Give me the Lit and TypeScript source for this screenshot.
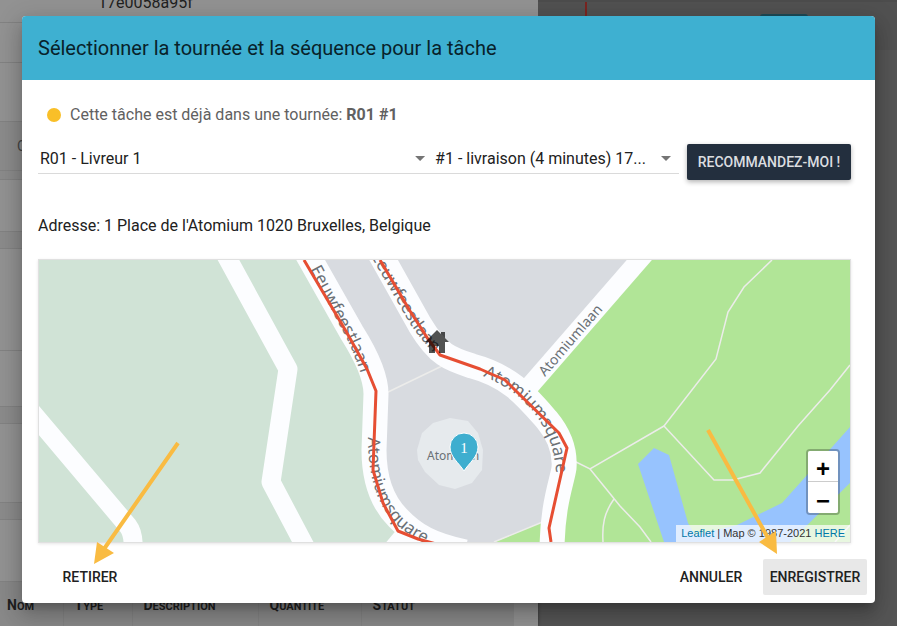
import { LitElement, html, css, svg } from "lit";
import { customElement } from "lit/decorators.js";

/* Dimmed dispatch page that lies behind the dialog. */
@customElement("dispatch-page")
class DispatchPage extends LitElement {
  static styles = css`
    :host {
      display: flex;
      min-height: 100vh;
      background: #555;
      font-family: Roboto, sans-serif;
      color: #1f1f1f;
    }
    .list {
      flex: 3;
      min-width: 0;
      background: #929292;
      box-shadow: 0 0 3px #333;
    }
    .row {
      box-sizing: border-box;
      border-bottom: 1px solid #828282;
      overflow: hidden;
    }
    .first {
      height: 23px;
      padding-left: 98px;
      font-size: 16px;
      line-height: 6px;
    }
    .h40 { height: 40px; }
    .h52 { height: 52px; }
    .h56 { height: 56px; }
    .h59 { height: 59px; }
    .h62 { height: 62px; }
    .h79 { height: 79px; }
    .h102 { height: 102px; }
    .band {
      height: 49px;
      padding-left: 17px;
      background: #8b8b8b;
      font-size: 14px;
      line-height: 49px;
      color: #444;
    }
    .gap {
      height: 17px;
      background: #8b8b8b;
    }
    .gap.small { height: 9px; }
    table {
      width: calc(100% - 24px);
      border-collapse: collapse;
      table-layout: fixed;
      background: #888;
    }
    th {
      height: 44px;
      padding: 4px 0 0 11px;
      box-sizing: border-box;
      border-left: 1px solid #828282;
      font-size: 11px;
      line-height: 20px;
      text-transform: uppercase;
      text-align: left;
    }
    th::first-letter { font-size: 14px; }
    th:first-child {
      width: 63px;
      padding-left: 7px;
      border-left: 0;
    }
    .c2 { width: 69px; }
    .c3 { width: 126px; }
    .c4 { width: 103px; }
    .board { flex: 2; }
    .timeline {
      display: flex;
      height: 50px;
      box-sizing: border-box;
      padding: 0 89px 0 47px;
      justify-content: space-between;
      border-top: 2px solid #4c4c4c;
      background: #515151;
    }
    .now {
      width: 2px;
      background: #7a2420;
    }
    .pill {
      width: 48px;
      height: 20px;
      margin-top: 12px;
      border-radius: 3px;
      background: #1c4a56;
    }
  `;
  render() {
    return html`
      <div class="list">
        <div class="row first">17e0058a95f</div>
        <div class="row h40"></div>
        <div class="row h59"></div>
        <div class="row band">C</div>
        <div class="row gap small"></div>
        <div class="row h52"></div>
        <div class="row gap"></div>
        <div class="row h102"></div>
        <div class="row h56"></div>
        <div class="row gap"></div>
        <div class="row h79"></div>
        <div class="row gap"></div>
        <div class="row h62"></div>
        <table>
          <tr>
            <th>Nom</th>
            <th class="c2">Type</th>
            <th class="c3">Description</th>
            <th class="c4">Quantité</th>
            <th>Statut</th>
          </tr>
        </table>
      </div>
      <div class="board">
        <div class="timeline"><div class="now"></div><div class="pill"></div></div>
      </div>
    `;
  }
}

/* Street map with route, stop marker and zoom control. */
@customElement("route-map")
class RouteMap extends LitElement {
  static styles = css`
    :host {
      display: block;
      position: relative;
      height: 282px;
      border: 1px solid #e0e0e0;
      box-shadow: 0 1px 3px rgba(0, 0, 0, 0.1);
      overflow: hidden;
    }
    .canvas {
      display: block;
      width: 100%;
      height: 100%;
    }
    .grey { fill: #d8dbe0; }
    .park { fill: #d0e3d6; }
    .green { fill: #b1e597; }
    .water { fill: #97c3fe; }
    .plaza { fill: #e6eaed; }
    .road {
      fill: none;
      stroke: #fcfdff;
      stroke-linejoin: round;
    }
    .wide { stroke-width: 25; }
    .mid { stroke-width: 19; }
    .trail {
      fill: none;
      stroke: #ececea;
      stroke-width: 1.5;
    }
    .route {
      fill: none;
      stroke: #e64e33;
      stroke-width: 3;
      stroke-linejoin: round;
    }
    .name {
      font-family: "Noto Sans", sans-serif;
      font-size: 17px;
      fill: #6a7075;
    }
    .street { font-size: 14px; }
    .place { font-size: 12px; }
    .house { fill: rgba(0, 0, 0, 0.68); }
    .pin {
      fill: #3eaecf;
      stroke: #fff;
      stroke-width: 1;
    }
    .pin-text {
      font-family: "Liberation Serif", serif;
      font-size: 15px;
      fill: #fff;
      text-anchor: middle;
    }
    .zoom {
      position: absolute;
      right: 10px;
      bottom: 27px;
      display: flex;
      flex-direction: column;
      border: 2px solid rgba(0, 0, 0, 0.25);
      border-radius: 4px;
      background-clip: padding-box;
    }
    .zoom button {
      width: 30px;
      height: 31px;
      box-sizing: border-box;
      padding: 6px 0 0;
      border: 0;
      background: #fff;
      font: bold 24px/24px "Liberation Sans", sans-serif;
      color: #000;
    }
    .zoom button:first-child {
      border-bottom: 1px solid #ccc;
      border-radius: 2px 2px 0 0;
    }
    .zoom button:last-child { border-radius: 0 0 2px 2px; }
    .credit {
      position: absolute;
      right: 0;
      bottom: 0;
      padding: 0 5px;
      background: rgba(255, 255, 255, 0.7);
      font: 11px/17px "Liberation Sans", sans-serif;
      color: #333;
    }
    .credit a {
      color: #0078a8;
      text-decoration: none;
    }
  `;
  render() {
    return html`
      <svg class="canvas" viewBox="39 260 811 282" preserveAspectRatio="xMidYMid slice">
        ${svg`
        <defs>
          <path id="lane-a" d="M310 269 L339 324 Q354 349 366 390" />
          <path id="lane-b" d="M356 230 L409 322 Q419 338 434 353" />
          <path id="ring-a" d="M483 376 C510 387 527 402 539 420 C550 437 556 452 557 490" />
          <path id="ring-b" d="M368 437 C368 478 377 505 396 524 C408 535 420 542 446 552" />
          <path id="lane-c" d="M545 377 L620 290" />
        </defs>
        <rect class="grey" x="39" y="260" width="811" height="282" />
        <path class="park" d="M39 260H311L352 333L375 390V455L382 500L402 528L391 542H39Z" />
        <path class="green" d="M638 260H850V542H552L564 465L555 430L530 386Z" />
        <path class="green" d="M495 542L552 518V542Z" />
        <path class="water" d="M638 464L654 448L669 455L688 523L695 535L737 525L782 503L850 427V483L790 542H664Z" />
        <path class="trail" d="M494 542L545 521M386 393L442 366" />
        <path class="trail" d="M772 260L744 287L728 312L716 359L664 426L714 480H733L760 473L798 426L830 390L850 365" />
        <path class="trail" d="M664 426L590 469L572 460M590 469L620 506L640 527L651 542M614 499C604 513 602 525 603 542M850 525L835 542" />
        <path class="road mid" d="M223 250L288 369L271 482L308 552" />
        <path class="road mid" d="M30 410L128 526Q134 534 133 550" />
        <path class="road wide" d="M305 250L352 333Q376 371 376 394L374 450C374 480 382 502 398 518C415 536 432 545 465 552" />
        <path class="road wide" d="M378 250L420 325C438 355 450 359 472 366C510 376 526 396 547 420C562 438 565 455 564 468C562 482 552 505 552 552" />
        <path class="road mid" d="M648 250L528 388" />
        <path class="road wide" d="M416 526L396 550" />
        <path class="plaza" d="M417 450L422 433L433 423L450 418L468 421L478 433L483 450L482 470L472 483L455 489L439 485L425 472L418 460Z" />
        <text class="name place" x="427" y="460">Atomium</text>
        <text class="name"><textPath href="#lane-a">Eeuwfeestlaan</textPath></text>
        <text class="name" text-anchor="end"><textPath href="#lane-b" startOffset="100%">Eeuwfeestlaan</textPath></text>
        <text class="name"><textPath href="#ring-a">Atomiumsquare</textPath></text>
        <text class="name"><textPath href="#ring-b">Atomiumsquare</textPath></text>
        <text class="name street"><textPath href="#lane-c">Atomiumlaan</textPath></text>
        <path class="route" d="M304 260L347 333L367 369L376 391L373 470L383 503L398 531L418 539L440 545" />
        <path class="route" d="M380 260L410 311L428 339L440 355L480 369L505 380L515 390L559 433L567 448L549 528L551 542" />
        <path class="house" d="M437 330L441 334V332H445V338L449 342H445V353H439V346H435V353H429V342H425Z" />
        <path class="pin" d="M464 471C459 463 450 457 450 447A14 14 0 0 1 478 447C478 457 469 463 464 471Z" />
        <text class="pin-text" x="464" y="453">1</text>
        `}
      </svg>
      <div class="zoom">
        <button aria-label="Zoom avant">+</button>
        <button aria-label="Zoom arrière">−</button>
      </div>
      <div class="credit"><a href="#">Leaflet</a> | Map © 1987-2021 <a href="#">HERE</a></div>
    `;
  }
}

@customElement("app-root")
class AppRoot extends LitElement {
  static styles = css`
    :host {
      display: block;
      position: relative;
      height: 100vh;
      overflow: hidden;
      font-family: Roboto, sans-serif;
      color: #212121;
    }
    .backdrop {
      position: absolute;
      inset: 0;
      padding: 16px 22px;
    }
    .dialog {
      position: relative;
      border-radius: 4px;
      background: #fff;
      box-shadow:
        0 7px 8px -4px rgba(0, 0, 0, 0.2),
        0 13px 19px 2px rgba(0, 0, 0, 0.14),
        0 5px 24px 4px rgba(0, 0, 0, 0.12);
    }
    h2 {
      margin: 0;
      padding: 0 16px;
      border-radius: 4px 4px 0 0;
      background: #3eb0d1;
      font-size: 20px;
      font-weight: 400;
      line-height: 64px;
      color: #08222a;
    }
    .content { padding: 25px 24px 0 16px; }
    .status {
      display: flex;
      align-items: center;
      gap: 9px;
      margin: 0 0 19px;
      padding-left: 9px;
      font-size: 16px;
      line-height: 20px;
      color: #616161;
    }
    .dot {
      width: 14px;
      height: 14px;
      border-radius: 50%;
      background: #f9bf28;
    }
    .controls {
      display: flex;
      align-items: flex-start;
      gap: 8px;
    }
    .selects {
      display: flex;
      flex: 1;
      min-width: 0;
      border-bottom: 1px solid #dadada;
    }
    .field {
      display: flex;
      align-items: center;
      min-width: 0;
      padding-right: 8px;
    }
    .tour { flex: 397; }
    .sequence { flex: 244; }
    select {
      flex: 1;
      min-width: 0;
      height: 29px;
      padding: 0 2px;
      border: 0;
      appearance: none;
      background: transparent;
      font: 16px/20px Roboto, sans-serif;
      color: #212121;
      text-overflow: ellipsis;
    }
    .caret {
      width: 10px;
      height: 5px;
      background: #757575;
      clip-path: polygon(0 0, 100% 0, 50% 100%);
      pointer-events: none;
    }
    .btn {
      height: 36px;
      min-width: 88px;
      padding: 0 6px;
      border: 0;
      border-radius: 2px;
      background: transparent;
      font: 500 14px/36px Roboto, sans-serif;
      color: #212121;
      text-transform: uppercase;
    }
    .primary {
      min-width: 164px;
      background: #232f3e;
      box-shadow: 0 2px 5px rgba(0, 0, 0, 0.3);
      color: #dcdee0;
    }
    .focused {
      min-width: 104px;
      background: #e8e8e8;
    }
    .address {
      margin: 36px 0 23px;
      font-size: 16px;
      line-height: 20px;
    }
    .actions {
      display: flex;
      gap: 8px;
      padding: 16px 8px 8px 24px;
    }
    .spacer { flex: 1; }
    .arrows {
      position: absolute;
      inset: 0;
      width: 100%;
      height: 100%;
      pointer-events: none;
    }
    .shaft {
      stroke: #f9bb42;
      stroke-width: 4;
    }
    .head { fill: #f9bb42; }
  `;
  render() {
    return html`
      <dispatch-page></dispatch-page>
      <div class="backdrop">
        <div class="dialog" role="dialog" aria-labelledby="title">
          <h2 id="title">Sélectionner la tournée et la séquence pour la tâche</h2>
          <div class="content">
            <p class="status">
              <span class="dot"></span>
              <span>Cette tâche est déjà dans une tournée: <b>R01 #1</b></span>
            </p>
            <div class="controls">
              <div class="selects">
                <div class="field tour">
                  <select aria-label="Tournée"><option>R01 - Livreur 1</option></select>
                  <span class="caret"></span>
                </div>
                <div class="field sequence">
                  <select aria-label="Séquence"><option>#1 - livraison (4 minutes) 17...</option></select>
                  <span class="caret"></span>
                </div>
              </div>
              <button class="btn primary">Recommandez-moi !</button>
            </div>
            <p class="address">Adresse: 1 Place de l'Atomium 1020 Bruxelles, Belgique</p>
            <route-map></route-map>
          </div>
          <div class="actions">
            <button class="btn">Retirer</button>
            <span class="spacer"></span>
            <button class="btn">Annuler</button>
            <button class="btn focused">Enregistrer</button>
          </div>
          <svg class="arrows" viewBox="22 16 853 587" preserveAspectRatio="none" aria-hidden="true">
            <path class="shaft" d="M178 443L104 549M708 430L768 538" />
            <path class="head" d="M94 564L97 542L114 553ZM777 554L759 542L776 531Z" />
          </svg>
        </div>
      </div>
    `;
  }
}
